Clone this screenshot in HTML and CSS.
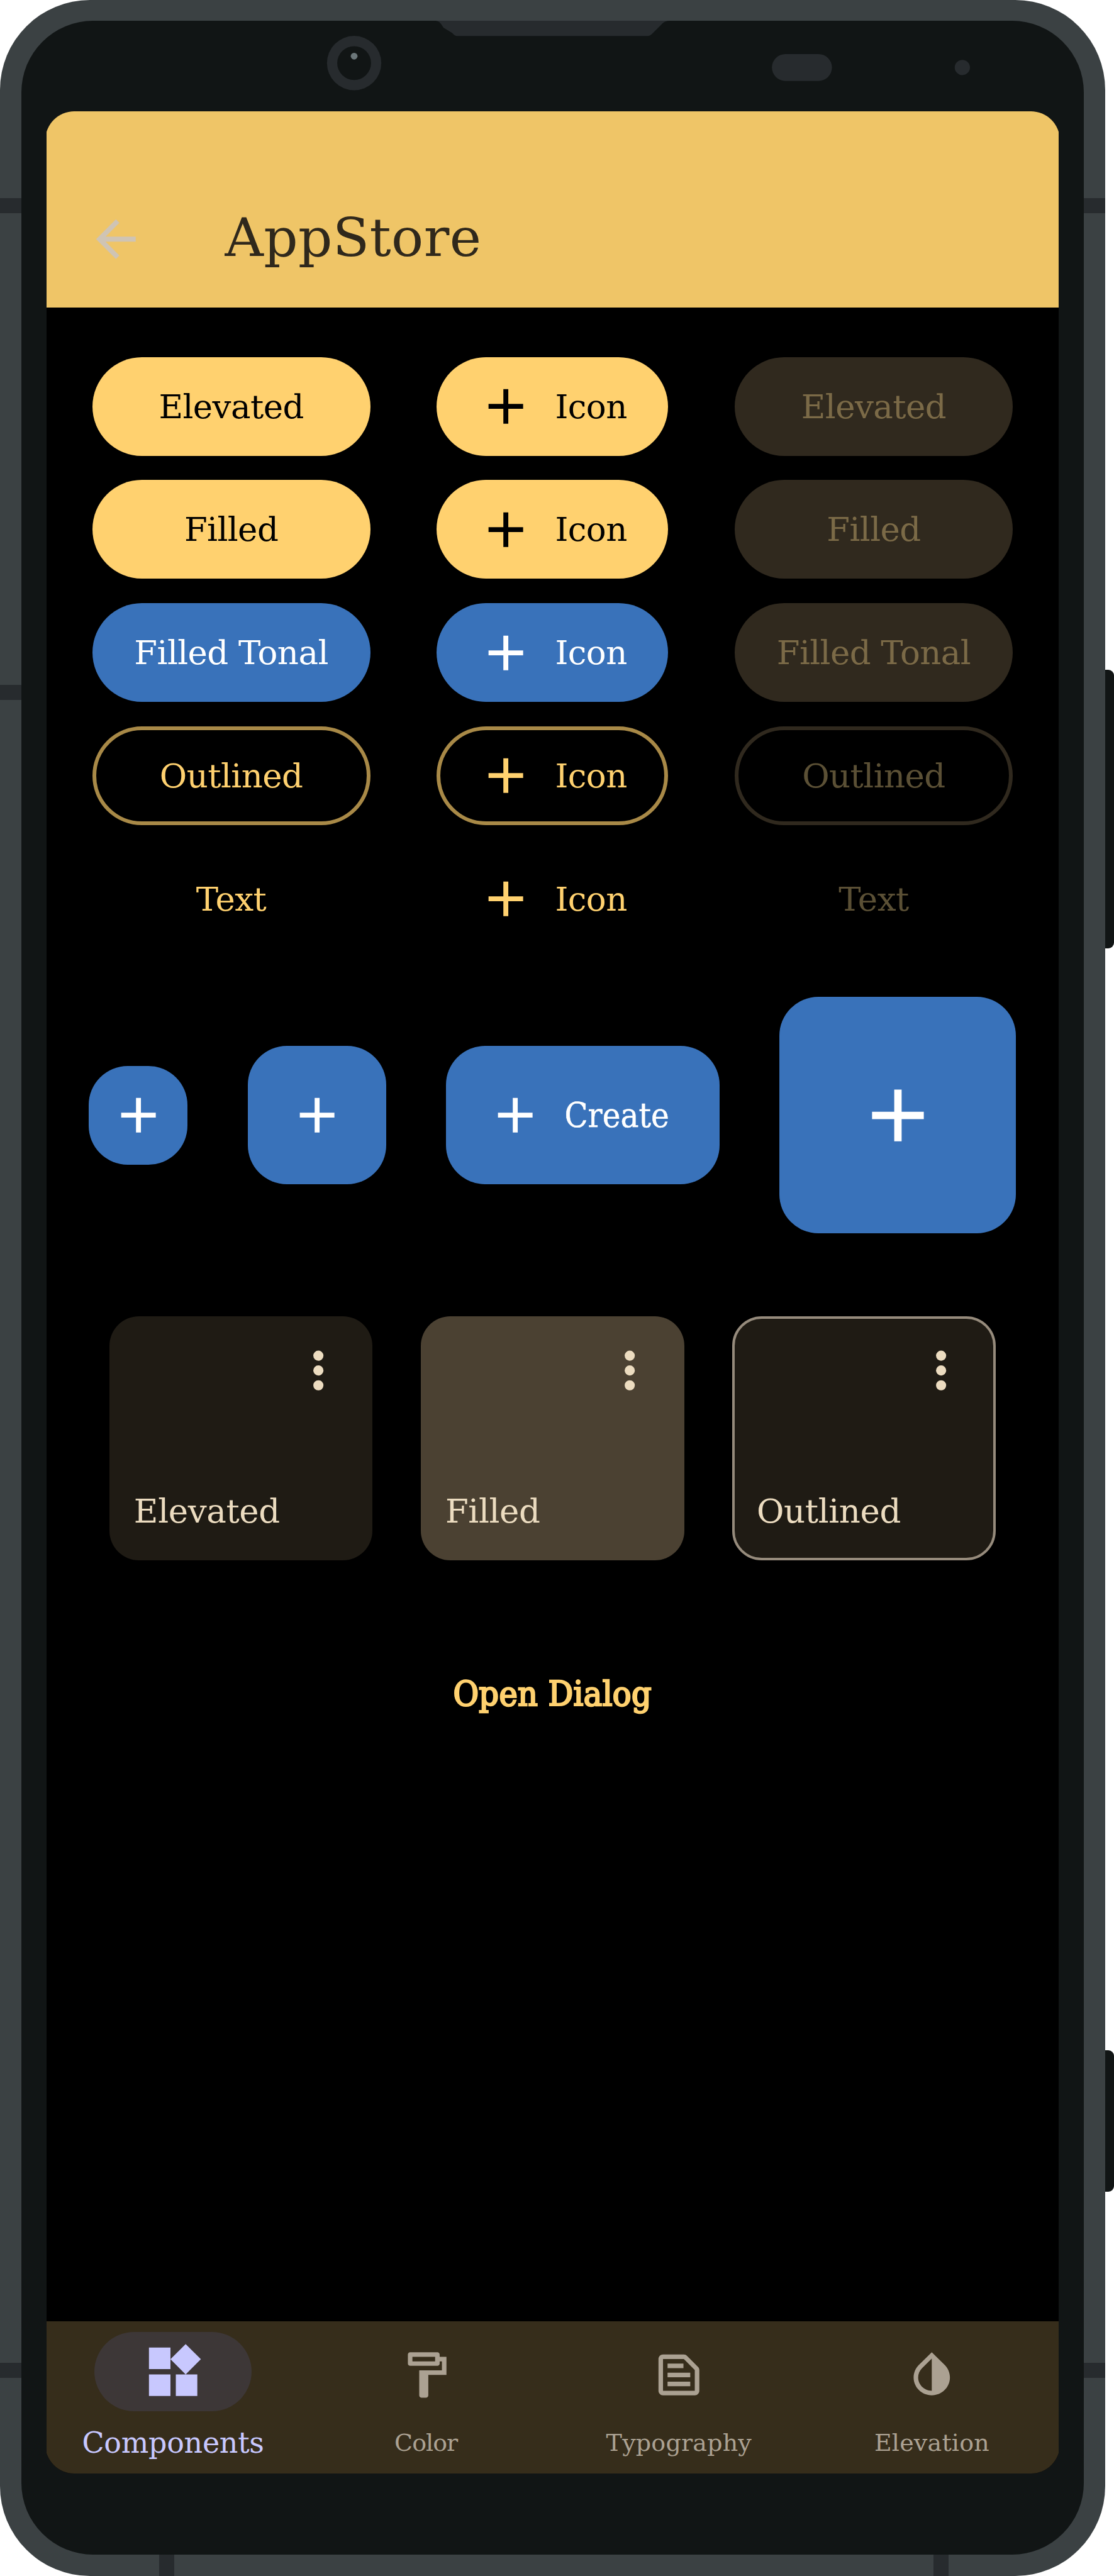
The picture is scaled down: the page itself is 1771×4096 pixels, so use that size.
FILE: index.html
```html
<!DOCTYPE html>
<html lang="en">
<head>
<meta charset="utf-8">
<title>AppStore</title>
<link rel="stylesheet" href="styles.css">
</head>
<body>
<svg class="defs" width="0" height="0" aria-hidden="true">
  <symbol id="add" viewBox="0 0 24 24"><path d="M19 13h-6v6h-2v-6H5v-2h6V5h2v6h6z"/></symbol>
  <symbol id="more" viewBox="0 0 24 24"><circle cx="12" cy="6" r="2.05"/><circle cx="12" cy="12" r="2.05"/><circle cx="12" cy="18" r="2.05"/></symbol>
</svg>
<div class="phone">
  <div class="bezel">
    <div class="screen">
      <div class="display">
        <header class="appbar">
          <svg class="back" viewBox="0 0 24 24"><path d="M20 11H7.83l5.59-5.59L12 4l-8 8 8 8 1.41-1.41L7.83 13H20z"/></svg>
          <h1 class="title">AppStore</h1>
        </header>
        <main class="content">
          <section class="buttons">
            <button class="btn primary"><span>Elevated</span></button>
            <button class="btn primary with-icon"><svg class="icon"><use href="#add"/></svg><span>Icon</span></button>
            <button class="btn disabled"><span>Elevated</span></button>

            <button class="btn primary"><span>Filled</span></button>
            <button class="btn primary with-icon"><svg class="icon"><use href="#add"/></svg><span>Icon</span></button>
            <button class="btn disabled"><span>Filled</span></button>

            <button class="btn tonal"><span>Filled Tonal</span></button>
            <button class="btn tonal with-icon"><svg class="icon"><use href="#add"/></svg><span>Icon</span></button>
            <button class="btn disabled"><span>Filled Tonal</span></button>

            <button class="btn outlined"><span>Outlined</span></button>
            <button class="btn outlined with-icon"><svg class="icon"><use href="#add"/></svg><span>Icon</span></button>
            <button class="btn outlined-disabled"><span>Outlined</span></button>

            <button class="btn text"><span>Text</span></button>
            <button class="btn text with-icon"><svg class="icon"><use href="#add"/></svg><span>Icon</span></button>
            <button class="btn text-disabled"><span>Text</span></button>
          </section>
          <section class="fabs">
            <button class="fab small"><svg class="icon"><use href="#add"/></svg></button>
            <button class="fab regular"><svg class="icon"><use href="#add"/></svg></button>
            <button class="fab extended"><svg class="icon"><use href="#add"/></svg><span>Create</span></button>
            <button class="fab large"><svg class="icon"><use href="#add"/></svg></button>
          </section>
          <section class="cards">
            <article class="card elevated"><svg class="icon"><use href="#more"/></svg><span>Elevated</span></article>
            <article class="card filled"><svg class="icon"><use href="#more"/></svg><span>Filled</span></article>
            <article class="card outline"><svg class="icon"><use href="#more"/></svg><span>Outlined</span></article>
          </section>
          <button class="dialog">Open Dialog</button>
        </main>
        <nav class="nav">
          <a class="tab active">
            <span class="indicator"><svg viewBox="0 0 24 24"><path d="M13 13v8h8v-8zM3 21h8v-8H3zM3 3v8h8V3zm13.66-1.31L11 7.34 16.66 13l5.66-5.66z"/></svg></span>
            <span class="label">Components</span>
          </a>
          <a class="tab">
            <span class="indicator"><svg viewBox="0 0 24 24"><path fill-rule="evenodd" d="M18 4V3c0-.55-.45-1-1-1H5c-.55 0-1 .45-1 1v4c0 .55.45 1 1 1h12c.55 0 1-.45 1-1V6h1v4H9v11c0 .55.45 1 1 1h2c.55 0 1-.45 1-1v-9h8V4h-3zM16 6H6V4h10z"/></svg></span>
            <span class="label color">Color</span>
          </a>
          <a class="tab">
            <span class="indicator"><svg viewBox="0 0 24 24"><path d="M14.17 5L19 9.83V19H5V5h9.17m0-2H5c-1.1 0-2 .9-2 2v14c0 1.1.9 2 2 2h14c1.1 0 2-.9 2-2V9.83c0-.53-.21-1.04-.59-1.41l-4.83-4.83c-.37-.38-.88-.59-1.41-.59zM7 15h10v2H7v-2zm0-4h10v2H7v-2zm0-4h7v2H7V7z"/></svg></span>
            <span class="label">Typography</span>
          </a>
          <a class="tab">
            <span class="indicator"><svg viewBox="0 0 24 24"><path d="M12 4.81V19c-3.31 0-6-2.63-6-5.87 0-1.56.62-3.03 1.75-4.14L12 4.81M12 2L6.35 7.56C4.9 8.99 4 10.96 4 13.13 4 17.48 7.58 21 12 21s8-3.52 8-7.87c0-2.17-.9-4.14-2.35-5.57L12 2z"/></svg></span>
            <span class="label">Elevation</span>
          </a>
        </nav>
      </div>
    </div>
  </div>
  <!-- speaker, camera and sensors -->
  <svg class="sensors" viewBox="0 0 1756 177">
    <path fill="#272b2e" d="M692 33C700 34 701 38 705 44L719 52.500C722 56 724 57.200 728 57.200H1029C1033 57.200 1035 55.500 1038 52.500L1052 38.500C1056 34.500 1059 33 1066 33Z"/>
    <circle cx="563" cy="100.300" r="43.200" fill="#272b2e"/>
    <circle cx="563" cy="100.300" r="26.900" fill="#111515"/>
    <circle cx="563" cy="89.300" r="5.400" fill="#6b7679"/>
    <rect x="1227.200" y="85.900" width="95.400" height="42.800" rx="21.400" fill="#272b2e"/>
    <circle cx="1529.900" cy="107.300" r="12.100" fill="#272b2e"/>
  </svg>
  <!-- antenna bands -->
  <i class="band left b1"></i><i class="band left b2"></i><i class="band left b3"></i>
  <i class="band right b1"></i><i class="band right b3"></i>
  <i class="band bottom b4"></i><i class="band bottom b5"></i>
  <i class="key volume"></i><i class="key power"></i>
</div>
</body>
</html>
```

FILE: styles.css
```css
* { box-sizing: border-box; }
body {
  margin: 0;
  width: 1771px;
  height: 4096px;
  overflow: hidden;
  background: #fff;
  font-family: "DejaVu Serif", serif;
}
.defs { position: absolute; }
svg { display: block; fill: currentColor; flex: none; }
button { border: 0; margin: 0; padding: 0; background: none; color: inherit; font: inherit; }

.phone {
  position: relative;
  width: 1756.500px;
  height: 4095.500px;
  padding: 33px 33.500px 33.500px;
  border-radius: 143px;
  background: #3b4143;
}
.bezel {
  height: 4029px;
  padding: 144px 40.500px 129px;
  border-radius: 114px;
  background: #111515;
}
.screen { height: 3756px; overflow: hidden; }
.display {
  display: flex;
  flex-direction: column;
  height: 3756px;
  margin: 0 -2px;
  border-radius: 46px;
  overflow: hidden;
  background: #000;
}

.appbar {
  display: flex;
  align-items: center;
  height: 312.300px;
  padding: 94px 0 0 65px;
  background: #efc567;
}
.back { width: 94.500px; height: 94.500px; color: #cfc4b4; }
.title {
  margin: -4px 0 0 126px;
  font-weight: 400;
  font-size: 85px;
  line-height: 100px;
  letter-spacing: .4px;
  color: #2f281c;
}

.content { flex: 1; display: flex; flex-direction: column; align-items: center; padding-top: 78.400px; }
.buttons {
  display: grid;
  grid-template-columns: 442px 368px 442px;
  gap: 38.800px 105.700px;
  grid-auto-rows: 157px;
}
.btn {
  display: flex;
  align-items: center;
  justify-content: center;
  border-radius: 79px;
  font-size: 53px;
  line-height: 64px;
  letter-spacing: -.6px;
  white-space: nowrap;
}
.btn span, .fab span { padding-top: 1px; }
.icon { width: 94.300px; height: 94.300px; }
.with-icon { justify-content: flex-start; padding-left: 62.500px; gap: 31.400px; }
.with-icon.outlined { padding-left: 56.500px; }
.primary { background: #ffd16f; color: #000; }
.tonal { background: #3972ba; color: #fff; }
.outlined { border: 6px solid #a88947; color: #ffd16f; }
.text { color: #ffd16f; }
.disabled { background: #30291e; color: #7b6a47; }
.outlined-disabled { border: 6px solid #30291e; color: #5b5035; }
.text-disabled { color: #5b5035; }

.fabs { display: flex; align-items: center; gap: 95.700px; margin-top: 77.200px; height: 376px; }
.fab {
  display: flex;
  align-items: center;
  justify-content: center;
  border-radius: 62px;
  background: #3972ba;
  color: #fff;
  font-family: "DejaVu Serif Condensed", "DejaVu Serif", serif;
  font-stretch: semi-condensed;
  font-size: 54px;
  line-height: 64px;
  -webkit-text-stroke: .5px currentColor;
}
.small { width: 157px; height: 157px; }
.regular { width: 219.500px; height: 219.500px; }
.extended { width: 434.500px; height: 219.500px; justify-content: flex-start; padding-left: 62.500px; gap: 31.400px; }
.large { width: 375.700px; height: 375.700px; }
.large .icon { width: 141px; height: 141px; }

.cards { display: flex; gap: 76.500px; margin-top: 132.200px; }
.card {
  display: flex;
  flex-direction: column;
  justify-content: space-between;
  width: 418.600px;
  height: 387.500px;
  padding: 39px 39px 40px;
  border-radius: 47px;
  color: #ecdcc0;
  font-size: 53px;
  line-height: 76px;
  letter-spacing: -.4px;
}
.card .icon { align-self: flex-end; }
.elevated { background: #1f1b14; }
.filled { background: #4b4132; }
.outline { padding: 35px 35px 36px; border: 4px solid #968b7c; background: #1f1b14; }

.dialog {
  margin-top: 172px;
  font-family: "DejaVu Serif Condensed", "DejaVu Serif", serif;
  font-stretch: semi-condensed;
  font-size: 55px;
  line-height: 80px;
  letter-spacing: .4px;
  color: #ffd16f;
  -webkit-text-stroke: 2.500px #ffd16f;
}

.nav { display: flex; height: 242.500px; padding: 17.500px 2px 0; background: #362d1b; }
.tab { flex: 1; display: flex; flex-direction: column; align-items: center; color: #aba192; }
.indicator {
  display: flex;
  align-items: center;
  justify-content: center;
  width: 250.700px;
  height: 125.500px;
  padding-top: 11px;
  border-radius: 63px;
}
.indicator svg { width: 86.600px; height: 86.600px; }
.label { margin-top: 20px; font-size: 38px; line-height: 60px; letter-spacing: .2px; }
.color { letter-spacing: -1px; }
.active { color: #c8c8fe; }
.active .indicator { padding-top: 0; background: #3d3737; }
.active svg { width: 102.500px; height: 102.500px; }
.active .label { font-size: 46px; letter-spacing: -.3px; }

.sensors { position: absolute; left: 0; top: 0; width: 1756px; height: 177px; }
.band { position: absolute; background: #272b2e; }
.left { left: 0; width: 33.500px; height: 23.700px; }
.right { right: 0; width: 33.500px; height: 23.700px; }
.bottom { bottom: -.5px; width: 24px; height: 34px; }
.b1 { top: 315px; }
.b2 { top: 1089px; }
.b3 { top: 3757px; }
.b4 { left: 253px; }
.b5 { left: 1484.300px; }
.key { position: absolute; left: 1756.500px; width: 14.500px; border-radius: 0 9px 9px 0; background: #111515; }
.volume { top: 1064.600px; height: 443.500px; }
.power { top: 3260px; height: 224.700px; }
```
